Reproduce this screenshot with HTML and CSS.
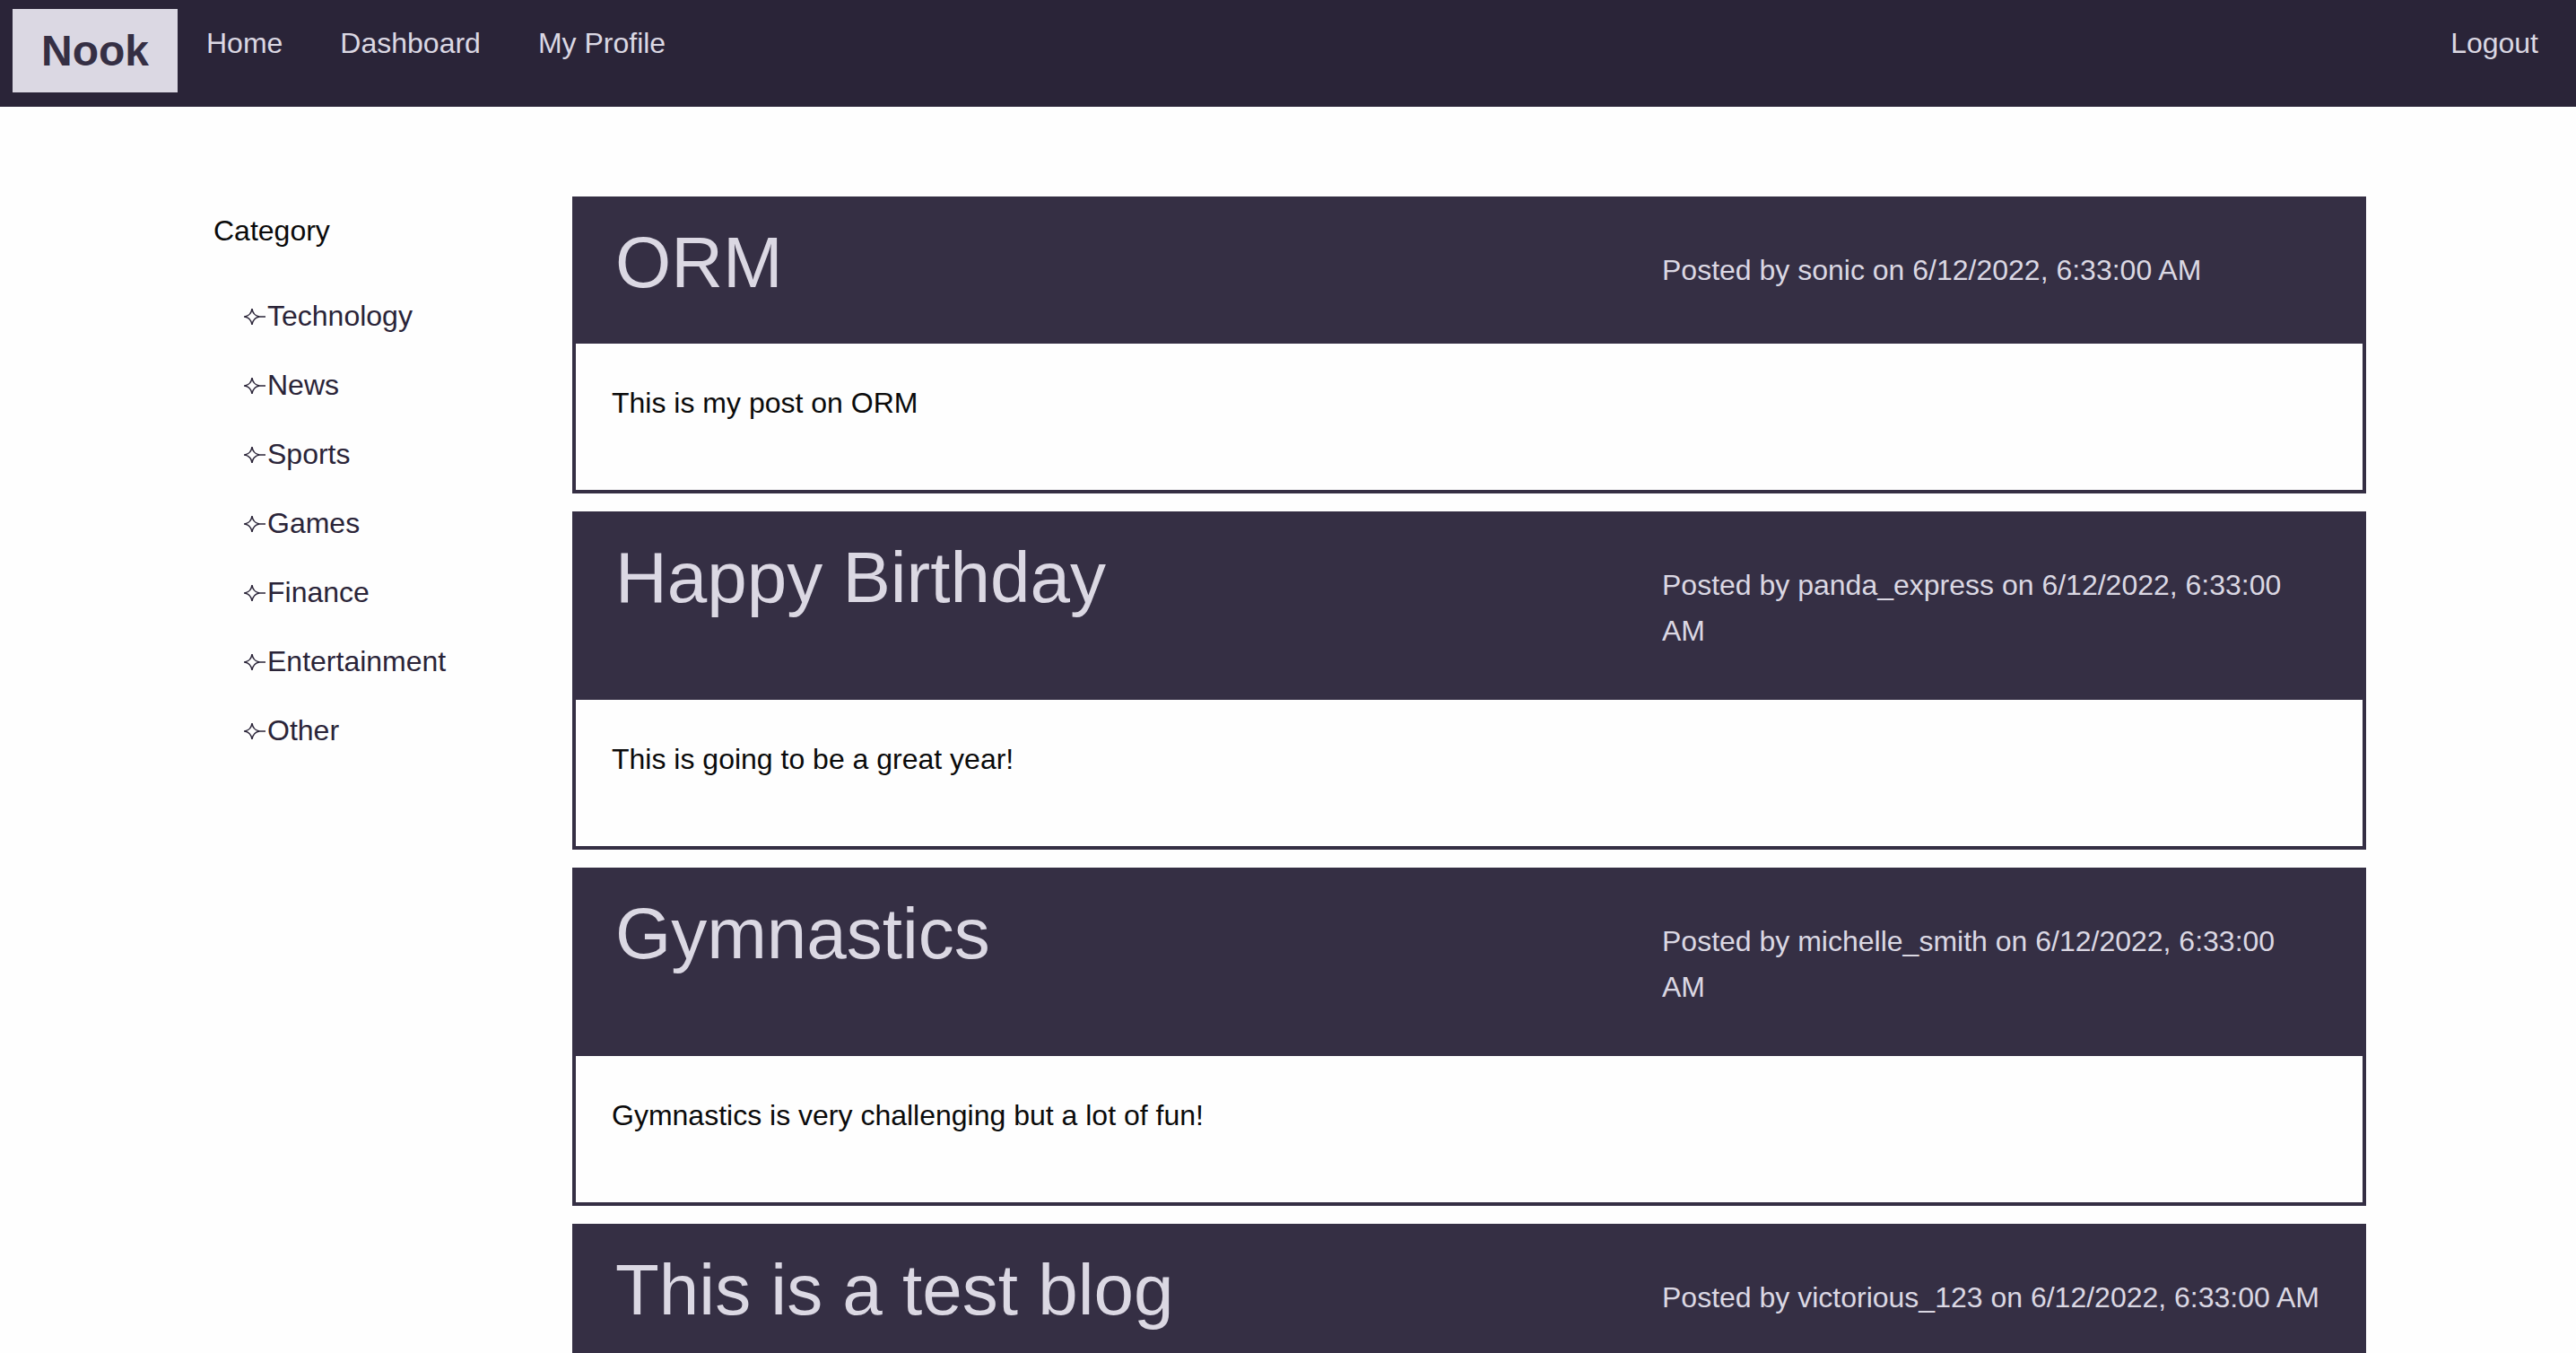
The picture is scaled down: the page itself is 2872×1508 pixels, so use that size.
FILE: index.html
```html
<!DOCTYPE html>
<html lang="en">
<head>
  <meta charset="utf-8">
  <meta name="viewport" content="width=device-width, initial-scale=1">
  <title>Nook</title>
  <link rel="stylesheet" href="styles.css">
</head>
<body>
  <svg class="sprite" aria-hidden="true">
    <symbol id="star" viewBox="0 0 24 20">
      <path d="M0 10H2M16 10H24" stroke-width="1.5"/>
      <path d="M9 1Q10 8.500 17 10Q10 11.500 9 19Q8 11.500 1 10Q8 8.500 9 1Z" stroke-width="1.5"/>
    </symbol>
  </svg>

  <header class="topbar">
    <a class="logo" href="#">Nook</a>
    <nav class="menu">
      <a href="#">Home</a>
      <a href="#">Dashboard</a>
      <a href="#">My Profile</a>
      <a class="logout" href="#">Logout</a>
    </nav>
  </header>

  <div class="page">
    <aside class="sidebar">
      <p class="sidebar-title">Category</p>
      <ul class="categories">
        <li><a href="#"><svg class="star"><use href="#star"/></svg>Technology</a></li>
        <li><a href="#"><svg class="star"><use href="#star"/></svg>News</a></li>
        <li><a href="#"><svg class="star"><use href="#star"/></svg>Sports</a></li>
        <li><a href="#"><svg class="star"><use href="#star"/></svg>Games</a></li>
        <li><a href="#"><svg class="star"><use href="#star"/></svg>Finance</a></li>
        <li><a href="#"><svg class="star"><use href="#star"/></svg>Entertainment</a></li>
        <li><a href="#"><svg class="star"><use href="#star"/></svg>Other</a></li>
      </ul>
    </aside>

    <main class="posts">
      <article class="post">
        <header class="post-head">
          <h2 class="post-title"><a href="#">ORM</a></h2>
          <p class="post-meta">Posted by sonic on 6/12/2022, 6:33:00 AM</p>
        </header>
        <p class="post-body">This is my post on ORM</p>
      </article>
      <article class="post">
        <header class="post-head">
          <h2 class="post-title"><a href="#">Happy Birthday</a></h2>
          <p class="post-meta">Posted by panda_express on 6/12/2022, 6:33:00 AM</p>
        </header>
        <p class="post-body">This is going to be a great year!</p>
      </article>
      <article class="post">
        <header class="post-head">
          <h2 class="post-title"><a href="#">Gymnastics</a></h2>
          <p class="post-meta">Posted by michelle_smith on 6/12/2022, 6:33:00 AM</p>
        </header>
        <p class="post-body">Gymnastics is very challenging but a lot of fun!</p>
      </article>
      <article class="post">
        <header class="post-head">
          <h2 class="post-title"><a href="#">This is a test blog</a></h2>
          <p class="post-meta">Posted by victorious_123 on 6/12/2022, 6:33:00 AM</p>
        </header>
      </article>
    </main>
  </div>
</body>
</html>
```
FILE: styles.css
```css
:root {
  --ink: #2a2438;
  --panel: #352f44;
  --mist: #dbd8e3;
  --paper: #fefefe;
}

* {
  box-sizing: border-box;
}

body {
  margin: 0;
  background: var(--paper);
  color: #0a0a0a;
  font: 32px/51px "Helvetica Neue", Helvetica, "Liberation Sans", Arial, sans-serif;
}

h2,
p,
ul {
  margin: 0;
  padding: 0;
  font-weight: normal;
}

a {
  color: inherit;
  text-decoration: none;
}

.sprite {
  display: none;
}

/* Top bar */
.topbar {
  display: flex;
  align-items: flex-start;
  padding: 10px 10px 16px 14px;
  background: var(--ink);
  color: var(--mist);
}

.logo {
  padding: 8px 32px;
  background: var(--mist);
  color: var(--panel);
  font-size: 48px;
  font-weight: bold;
  line-height: 77px;
}

.menu {
  display: flex;
  flex: 1;
  gap: 64px;
  padding: 13px 32px;
}

.logout {
  margin-left: auto;
}

/* Layout */
.page {
  display: grid;
  grid-template-columns: 1fr 5fr;
  padding: 100px 234px 20px 238px;
}

.sidebar {
  padding-top: 13px;
}

.categories {
  display: grid;
  gap: 26px;
  padding: 44px 0 0 34px;
  color: var(--ink);
  list-style: none;
}

.categories a {
  display: flex;
  align-items: center;
  gap: 2px;
}

.star {
  width: 24px;
  height: 20px;
  fill: none;
  stroke: currentColor;
}

/* Posts */
.posts {
  display: grid;
  gap: 20px;
}

.post {
  border: 4px solid var(--panel);
}

.post-head {
  display: grid;
  grid-template-columns: 1fr 737px;
  padding: 0 44px;
  background: var(--panel);
  color: var(--mist);
}

.post-title {
  padding: 14px 0 34px;
  font-size: 80px;
  line-height: 112px;
}

.post-meta {
  padding: 53px 0 51px;
}

.post-body {
  padding: 41px 40px 71px;
}
```
